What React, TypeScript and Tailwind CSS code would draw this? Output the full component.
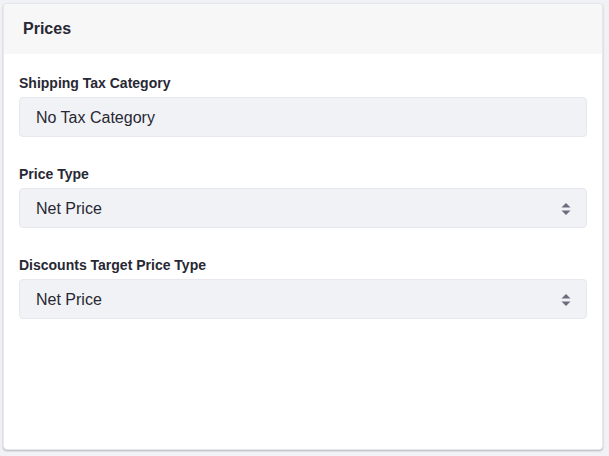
import React from 'react';

const font = { fontFamily: '"Liberation Sans", Arial, sans-serif' };

const SortIcon = () => (
  <svg width="10" height="14" viewBox="0 0 10 14" className="text-[#6b6c7e]">
    <path d="M5 1 L9.5 5.5 H0.5 Z" fill="currentColor" />
    <path d="M5 13 L9.5 8.5 H0.5 Z" fill="currentColor" />
  </svg>
);

const Field: React.FC<{ label: string; value: string; select?: boolean }> = ({ label, value, select }) => (
  <div className="flex flex-col">
    <label className="text-[14px] font-bold text-[#272833] leading-5 mb-[4px]">{label}</label>
    <div className="h-[40px] rounded-[4px] bg-[#f1f2f5] border border-[#e7e7ed] flex items-center justify-between pl-[16px] pr-[15px] pt-[1px] text-[16px] text-[#272833]">
      <span>{value}</span>
      {select && <SortIcon />}
    </div>
  </div>
);

export default function App() {
  return (
    <div className="min-h-screen bg-[#f1f2f5] pt-[3px] pl-[3px]" style={font}>
      <div className="w-[600px] h-[447px] bg-white rounded-[4px] border border-[#e7e7ed] shadow-[0_1px_2px_rgba(0,0,0,0.25)] flex flex-col overflow-hidden">
        <div className="h-[50px] bg-[#f7f7f8] flex items-center px-[19px]">
          <h2 className="text-[16px] font-bold text-[#272833]">Prices</h2>
        </div>
        <div className="px-[15px] pt-[19px] flex flex-col gap-[27px]">
          <Field label="Shipping Tax Category" value="No Tax Category" />
          <Field label="Price Type" value="Net Price" select />
          <Field label="Discounts Target Price Type" value="Net Price" select />
        </div>
      </div>
    </div>
  );
}
